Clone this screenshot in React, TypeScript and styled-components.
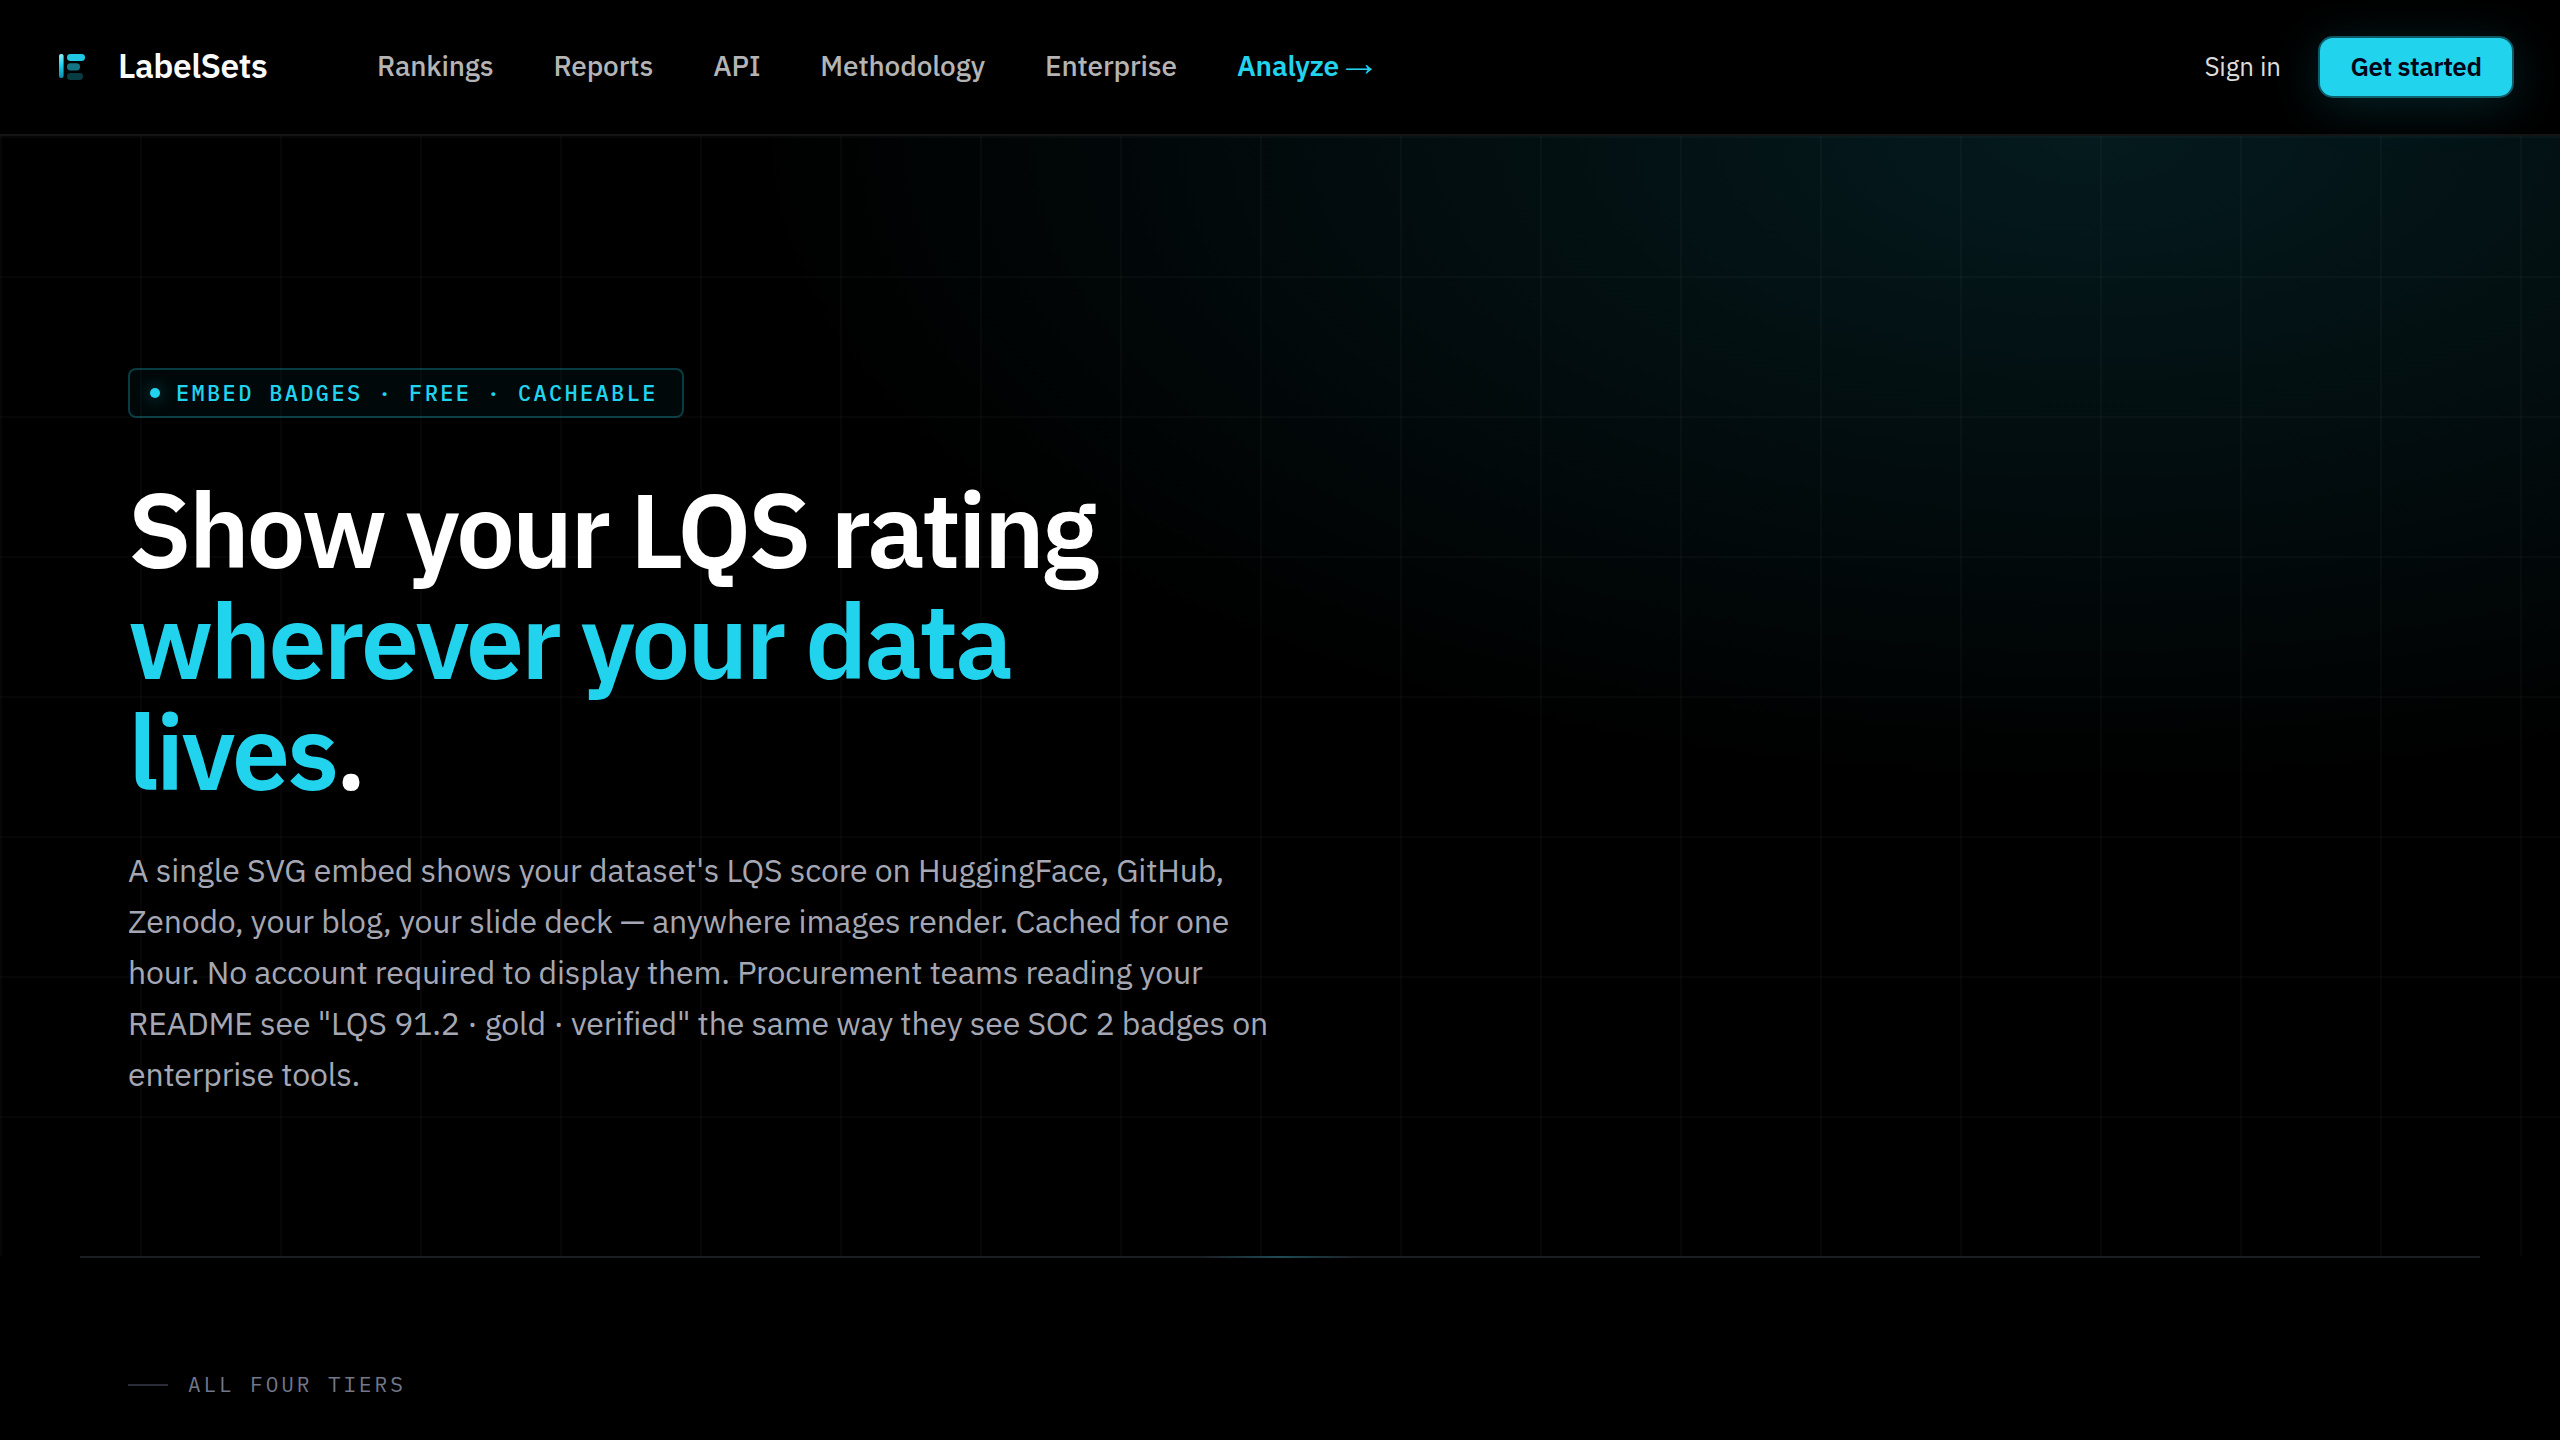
import React from 'react';
import styled, { createGlobalStyle } from 'styled-components';

const sans = "'IBM Plex Sans', 'Noto Sans', sans-serif";
const mono = "'IBM Plex Mono', 'Liberation Mono', monospace";
const cyan = '#22d3ee';

const GlobalStyle = createGlobalStyle`
  *, *::before, *::after { box-sizing: border-box; }
  body { margin: 0; background: #000; color: #fff; font-family: ${sans}; overflow: hidden; }
  h1, p { margin: 0; }
  a { color: inherit; text-decoration: none; }
`;

const Page = styled.div`
  height: 1440px;
  overflow: hidden;
`;

const Nav = styled.header`
  display: flex;
  align-items: center;
  height: 136px;
  padding: 0 48px;
  border-bottom: 2px solid rgba(255, 255, 255, 0.08);
`;

const Brand = styled.a`
  display: flex;
  align-items: center;
  gap: 22px;
  width: 329px;
  color: #fafafa;
`;

const BrandName = styled.span`
  padding-bottom: 3px;
  font-size: 33.6px;
  font-weight: 600;
  line-height: 44px;
  letter-spacing: -0.015em;
`;

const Mark = styled.svg`
  width: 48px;
  height: 48px;
`;

const Links = styled.nav`
  display: flex;
  gap: 60px;
  flex: 1;
  padding-bottom: 2px;
`;

const NavLink = styled.a<{ $accent?: boolean }>`
  height: 36px;
  font-size: 28px;
  line-height: 36px;
  letter-spacing: -0.005em;
  white-space: nowrap;
  font-weight: ${(p) => (p.$accent ? 600 : 500)};
  color: ${(p) => (p.$accent ? cyan : '#b4b4b4')};
`;

const Arrow = styled.span`
  margin-left: -5px;
  font-family: 'Noto Sans Symbols', 'Liberation Sans', sans-serif;
  font-size: 37px;
  font-weight: 400;
  line-height: 0;
  vertical-align: -6px;
`;

const Actions = styled.div`
  display: flex;
  align-items: center;
  gap: 39px;
`;

const SignIn = styled.a`
  padding-bottom: 2px;
  font-size: 26px;
  line-height: 34px;
  letter-spacing: -0.005em;
  color: #dcdcdc;
`;

const Cta = styled.a`
  width: 192px;
  height: 58px;
  border-radius: 13px;
  background: ${cyan};
  box-shadow: 0 0 0 2px rgba(34, 211, 238, 0.4), 0 8px 48px rgba(34, 211, 238, 0.18);
  color: #020617;
  font-size: 26px;
  font-weight: 600;
  line-height: 56px;
  letter-spacing: -0.017em;
  text-align: center;
`;

const Hero = styled.section`
  height: 1120px;
  padding: 232px 128px 0;
  background:
    linear-gradient(rgba(255, 255, 255, 0.022) 2px, transparent 2px) 0 0 / 140px 140px,
    linear-gradient(90deg, rgba(255, 255, 255, 0.022) 2px, transparent 2px) 0 0 / 140px 140px,
    radial-gradient(ellipse 1340px 650px at 2090px 0, rgba(34, 211, 238, 0.125), transparent);
`;

const Badge = styled.div`
  display: flex;
  align-items: center;
  gap: 16px;
  width: 556px;
  height: 50px;
  padding: 0 20px;
  border: 2px solid rgba(34, 211, 238, 0.25);
  border-radius: 8px;
  background: rgba(34, 211, 238, 0.04);
  color: ${cyan};
`;

const BadgeText = styled.span`
  padding-bottom: 1px;
  font-family: ${mono};
  font-size: 22px;
  font-weight: 500;
  line-height: 28px;
  letter-spacing: 2.34px;
  white-space: nowrap;
`;

const Dot = styled.span`
  flex: none;
  width: 10px;
  height: 10px;
  border-radius: 50%;
  background: ${cyan};
  box-shadow: 0 0 16px rgba(34, 211, 238, 0.5);
`;

const Title = styled.h1`
  width: 1040px;
  margin-top: 56px;
  font-size: 104px;
  font-weight: 600;
  line-height: 111px;
  letter-spacing: -0.028em;
`;

const Accent = styled.span`
  color: ${cyan};
`;

const Lead = styled.p`
  width: 1160px;
  margin-top: 38px;
  font-size: 32px;
  line-height: 51px;
  letter-spacing: -0.17px;
  color: #a5a8b4;
`;

const Divider = styled.div`
  height: 2px;
  margin: 0 80px;
  background:
    linear-gradient(90deg, transparent, rgba(34, 211, 238, 0.25), transparent) center / 160px 2px no-repeat,
    #1b1e23;
`;

const Tiers = styled.section`
  padding: 113px 128px 0;
`;

const Eyebrow = styled.div`
  display: flex;
  align-items: center;
  gap: 20px;
  font-family: ${mono};
  font-size: 21px;
  font-weight: 400;
  line-height: 27px;
  letter-spacing: 2.95px;
  color: #72778a;

  &::before {
    content: '';
    width: 40px;
    height: 2px;
    background: #2a2c38;
  }
`;

const links = ['Rankings', 'Reports', 'API', 'Methodology', 'Enterprise'];

export default function App() {
  return (
    <Page>
      <GlobalStyle />
      <Nav>
        <Brand href="#">
          <Mark viewBox="0 0 48 48">
            <defs>
              <linearGradient id="stem" x1="0" y1="0" x2="0" y2="1">
                <stop offset="0" stopColor="#8eeefa" />
                <stop offset="0.45" stopColor="#22d3ee" />
                <stop offset="1" stopColor="#0a8aa6" />
              </linearGradient>
            </defs>
            <rect x="11" y="11" width="4.6" height="24" rx="2" fill="url(#stem)" />
            <rect x="19" y="11" width="18" height="7" rx="3.4" fill={cyan} opacity="0.95" />
            <rect x="19" y="20.3" width="13" height="7.2" rx="3.4" fill={cyan} opacity="0.55" />
            <rect x="19" y="30" width="16" height="7" rx="3.4" fill={cyan} opacity="0.28" />
          </Mark>
          <BrandName>LabelSets</BrandName>
        </Brand>
        <Links>
          {links.map((label) => (
            <NavLink key={label} href="#">{label}</NavLink>
          ))}
          <NavLink href="#" $accent>Analyze <Arrow>→</Arrow></NavLink>
        </Links>
        <Actions>
          <SignIn href="#">Sign in</SignIn>
          <Cta href="#">Get started</Cta>
        </Actions>
      </Nav>
      <Hero>
        <Badge>
          <Dot />
          <BadgeText>EMBED BADGES · FREE · CACHEABLE</BadgeText>
        </Badge>
        <Title>
          Show your LQS rating <Accent>wherever your data lives</Accent>.
        </Title>
        <Lead>
          A single SVG embed shows your dataset's LQS score on HuggingFace, GitHub, Zenodo, your blog, your slide deck —
          anywhere images render. Cached for one hour. No account required to display them. Procurement teams reading
          your README see "LQS 91.2 · gold · verified" the same way they see SOC 2 badges on enterprise tools.
        </Lead>
      </Hero>
      <Divider />
      <Tiers>
        <Eyebrow>ALL FOUR TIERS</Eyebrow>
      </Tiers>
    </Page>
  );
}
